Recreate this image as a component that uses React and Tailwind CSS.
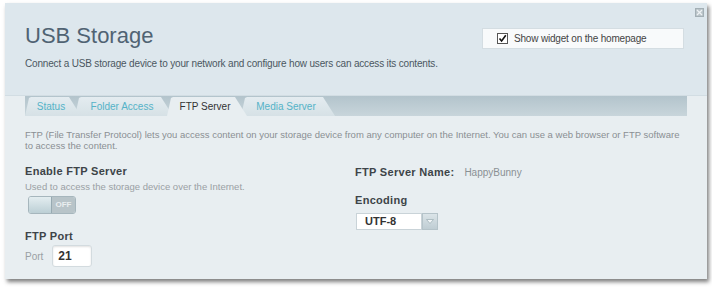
import React from "react";

const tabs = [
  { name: "Status", w: "w-[56px]" },
  { name: "Folder Access", w: "w-[98px]" },
  { name: "FTP Server", w: "w-[80px]", active: true },
  { name: "Media Server", w: "w-[94px]" },
];

const Tab = ({ tab, first }) => (
  <div
    className={`relative ${tab.w} h-[19px] flex items-center justify-center pr-[4px] text-[10px] [clip-path:polygon(0_100%,4px_1px,6px_0,calc(100%_-_12px)_0,100%_100%)] ${
      first ? "" : "-ml-[6px]"
    } ${
      tab.active
        ? "z-10 bg-[#e8eef1] text-[#333]"
        : "bg-gradient-to-b from-[#e4ecf0] to-[#d6e1e6] text-[#55b3c8]"
    }`}
  >
    {tab.name}
  </div>
);

export default function App() {
  return (
    <div className="w-[712px] h-[287px] bg-white pt-[3px] pl-[5px] font-['Liberation_Sans',Arial,sans-serif]">
      <div className="relative w-[702px] h-[276px] bg-[#e8eef1] shadow-[2px_3px_4px_rgba(0,0,0,0.5)] flex flex-col">
        {/* close */}
        <div className="absolute top-[5px] right-[3px] w-[9px] h-[9px] bg-[#b9c3c8] border border-[#a3afb5] flex items-center justify-center">
          <svg width="7" height="7" viewBox="0 0 7 7">
            <path d="M1 1L6 6M6 1L1 6" stroke="#eef2f4" strokeWidth="1.3" />
          </svg>
        </div>

        {/* header */}
        <div className="h-[93px] bg-[#dde7ed] border-b border-[#d2dde3] pl-[20px] pr-[23px] pt-[20px] flex justify-between">
          <div>
            <h1 className="text-[22px] leading-[26px] text-[#506373]">USB Storage</h1>
            <p className="mt-[8px] text-[10px] leading-[14px] tracking-[-0.17px] text-[#4b5761]">
              Connect a USB storage device to your network and configure how users can access its contents.
            </p>
          </div>
          <div className="mt-[5px] w-[202px] h-[21px] bg-[#f8fafb] border border-[#d4dde2] flex items-center pl-[14px] gap-[6px]">
            <div className="w-[11px] h-[11px] bg-white border border-[#555] flex items-center justify-center">
              <svg width="9" height="9" viewBox="0 0 9 9">
                <path d="M1.5 4.5L3.6 7L7.8 1.2" stroke="#111" strokeWidth="1.6" fill="none" />
              </svg>
            </div>
            <span className="text-[10px] tracking-[-0.18px] text-[#444]">Show widget on the homepage</span>
          </div>
        </div>

        {/* tab strip */}
        <div className="mx-[20px] h-[20px] bg-gradient-to-b from-[#b3c4cc] to-[#c8d5db] flex items-end">
          {tabs.map((t, i) => (
            <Tab key={t.name} tab={t} first={i === 0} />
          ))}
        </div>

        {/* content */}
        <div className="px-[20px] pt-[13px]">
          <p className="text-[9.5px] leading-[11px] text-[#8a8f93] whitespace-nowrap">
            FTP (File Transfer Protocol) lets you access content on your storage device from any computer on the Internet. You can use a web browser or FTP software
            <br />
            to access the content.
          </p>

          <div className="flex mt-[13px]">
            <div className="w-[330px]">
              <h2 className="text-[11px] leading-[14px] font-bold text-[#3d4448] tracking-[0.3px]">Enable FTP Server</h2>
              <p className="mt-[3px] text-[9.5px] leading-[12px] text-[#9aa0a4]">
                Used to access the storage device over the Internet.
              </p>
              <div className="mt-[3px] ml-[3px] w-[48px] h-[18px] flex rounded-[3px] overflow-hidden border border-[#a6b6bd]">
                <div className="w-[23px] bg-gradient-to-b from-[#e3edf0] to-[#bccfd5] border-r border-[#97aab2]" />
                <div className="flex-1 bg-[#b8c4c9] flex items-center justify-center text-[8px] font-bold text-[#e9eef0]">
                  OFF
                </div>
              </div>
              <h2 className="mt-[15px] text-[11px] leading-[14px] font-bold text-[#3d4448] tracking-[0.3px]">FTP Port</h2>
              <div className="mt-[2px] flex items-center gap-[9px]">
                <span className="text-[10px] text-[#9aa0a4]">Port</span>
                <div className="w-[40px] h-[22px] bg-white border border-[#d3dbdf] rounded-[3px] shadow-[inset_0_1px_2px_rgba(0,0,0,0.12)] flex items-center pl-[5px] text-[12px] font-bold text-[#333]">
                  21
                </div>
              </div>
            </div>

            <div className="pt-[1px]">
              <div className="flex items-baseline gap-[10px]">
                <h2 className="text-[11px] leading-[14px] font-bold text-[#3d4448] tracking-[0.3px]">FTP Server Name:</h2>
                <span className="text-[10px] text-[#8a9094]">HappyBunny</span>
              </div>
              <h2 className="mt-[13px] text-[11px] leading-[14px] font-bold text-[#3d4448] tracking-[0.3px]">Encoding</h2>
              <div className="mt-[6px] ml-[1px] flex h-[17px]">
                <div className="w-[66px] bg-white border border-[#c9d3d8] flex items-center pl-[8px] text-[11px] font-bold text-[#333]">
                  UTF-8
                </div>
                <div className="w-[16px] bg-gradient-to-b from-[#dbe4e8] to-[#bfcdd3] border border-[#b5c3c9] flex items-center justify-center">
                  <svg width="8" height="5" viewBox="0 0 8 5">
                    <path d="M0.5 0.5H7.5L4 4.5Z" fill="#f1f5f7" stroke="#a2b2b9" strokeWidth="0.8" />
                  </svg>
                </div>
              </div>
            </div>
          </div>
        </div>
      </div>
    </div>
  );
}
